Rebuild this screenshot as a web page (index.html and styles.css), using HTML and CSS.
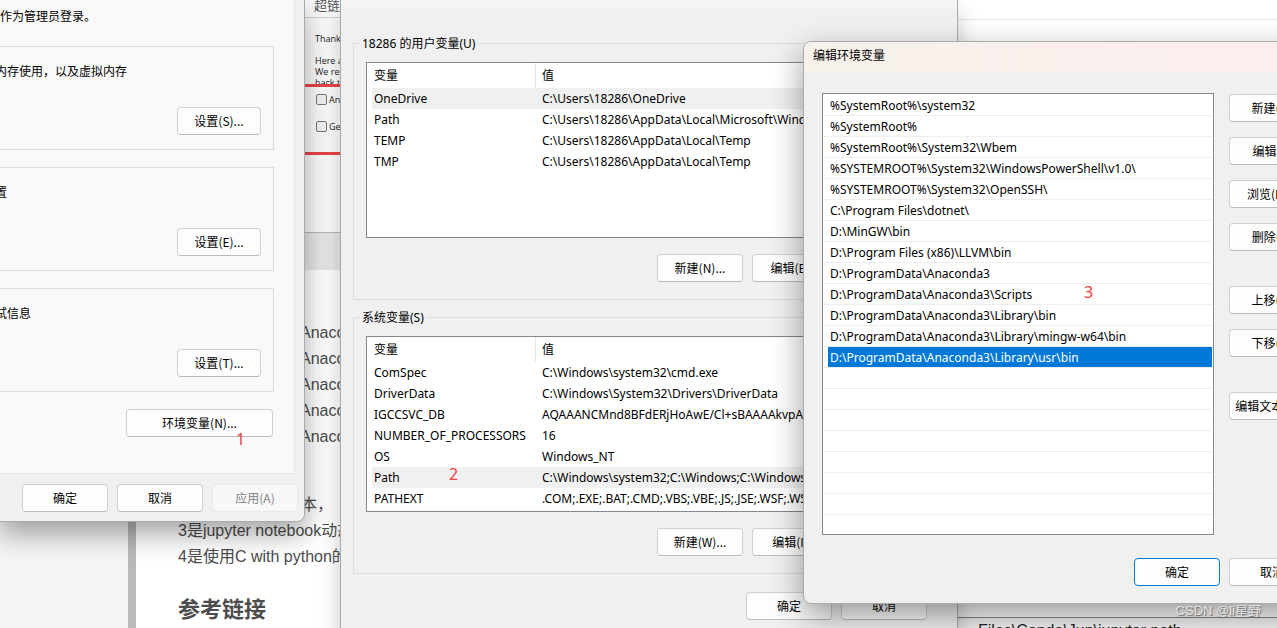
FILE: index.html
```html
<!DOCTYPE html>
<html lang="zh-CN">
<head>
<meta charset="utf-8">
<title>编辑环境变量</title>
<link rel="stylesheet" href="styles.css">
</head>
<body>
<main class="desktop">
  <div class="backdrop">
    <div class="side"></div>
    <article class="doc">
      <div class="shot">
        <div class="shot-bar">超链接</div>
        <div class="shot-text">
          <p>Thank you</p>
          <p class="para">Here are<br>We recommend<br>back to</p>
        </div>
        <div class="shot-options">
          <label><input type="checkbox">Anaconda</label>
          <label><input type="checkbox">Getting</label>
        </div>
        <div class="shot-foot"></div>
      </div>
      <div class="lines">
        <p>Anaconda</p><p>Anaconda</p><p>Anaconda</p><p>Anaconda</p><p>Anaconda</p>
      </div>
      <div class="notes">
        <p class="tail">本，</p>
        <p>3是jupyter notebook动态库</p>
        <p>4是使用C with python的时候</p>
      </div>
      <h2>参考链接</h2>
    </article>
    <aside class="pane">
      <div class="pane-top"></div>
      <p class="pane-text">Files\Conda\Jup\jupyter path</p>
    </aside>
  </div>

  <section class="window system">
    <div class="sheet">
      <p class="lead">作为管理员登录。</p>
      <div class="box"><p class="cut">内存使用，以及虚拟内存</p><button class="btn small">设置(S)...</button></div>
      <div class="box"><p class="cut">置</p><button class="btn small">设置(E)...</button></div>
      <div class="box"><p class="cut">试信息</p><button class="btn small">设置(T)...</button></div>
      <button class="btn env">环境变量(N)...</button>
    </div>
    <div class="actions">
      <button class="btn">确定</button>
      <button class="btn">取消</button>
      <button class="btn" disabled>应用(A)</button>
    </div>
  </section>

  <section class="window variables">
    <div class="strip"></div>
    <div class="groups">
      <fieldset>
        <legend>18286 的用户变量(U)</legend>
        <div class="listview">
          <table>
            <thead><tr><th class="name">变量</th><th>值</th></tr></thead>
            <tbody>
              <tr class="on"><td>OneDrive</td><td>C:\Users\18286\OneDrive</td></tr>
              <tr><td>Path</td><td>C:\Users\18286\AppData\Local\Microsoft\WindowsApps;</td></tr>
              <tr><td>TEMP</td><td>C:\Users\18286\AppData\Local\Temp</td></tr>
              <tr><td>TMP</td><td>C:\Users\18286\AppData\Local\Temp</td></tr>
            </tbody>
          </table>
        </div>
        <div class="row"><button class="btn">新建(N)...</button><button class="btn">编辑(E)...</button><button class="btn">删除(D)</button></div>
      </fieldset>
      <fieldset>
        <legend>系统变量(S)</legend>
        <div class="listview">
          <table>
            <thead><tr><th class="name">变量</th><th>值</th></tr></thead>
            <tbody>
              <tr><td>ComSpec</td><td>C:\Windows\system32\cmd.exe</td></tr>
              <tr><td>DriverData</td><td>C:\Windows\System32\Drivers\DriverData</td></tr>
              <tr><td>IGCCSVC_DB</td><td>AQAAANCMnd8BFdERjHoAwE/Cl+sBAAAAkvpAAAA</td></tr>
              <tr><td>NUMBER_OF_PROCESSORS</td><td>16</td></tr>
              <tr><td>OS</td><td>Windows_NT</td></tr>
              <tr class="on"><td>Path</td><td>C:\Windows\system32;C:\Windows;C:\Windows\System32</td></tr>
              <tr><td>PATHEXT</td><td>.COM;.EXE;.BAT;.CMD;.VBS;.VBE;.JS;.JSE;.WSF;.WSH;.MSC</td></tr>
            </tbody>
          </table>
        </div>
        <div class="row"><button class="btn">新建(W)...</button><button class="btn">编辑(I)...</button><button class="btn">删除(L)</button></div>
      </fieldset>
    </div>
    <div class="row bottom"><button class="btn">确定</button><button class="btn">取消</button></div>
  </section>

  <section class="window editor">
    <h1>编辑环境变量</h1>
    <div class="editor-body">
      <ul class="paths">
        <li>%SystemRoot%\system32</li>
        <li>%SystemRoot%</li>
        <li>%SystemRoot%\System32\Wbem</li>
        <li>%SYSTEMROOT%\System32\WindowsPowerShell\v1.0\</li>
        <li>%SYSTEMROOT%\System32\OpenSSH\</li>
        <li>C:\Program Files\dotnet\</li>
        <li>D:\MinGW\bin</li>
        <li>D:\Program Files (x86)\LLVM\bin</li>
        <li>D:\ProgramData\Anaconda3</li>
        <li>D:\ProgramData\Anaconda3\Scripts</li>
        <li>D:\ProgramData\Anaconda3\Library\bin</li>
        <li>D:\ProgramData\Anaconda3\Library\mingw-w64\bin</li>
        <li class="picked"><span>D:\ProgramData\Anaconda3\Library\usr\bin</span></li>
        <li></li><li></li><li></li><li></li><li></li><li></li><li></li><li></li>
      </ul>
      <div class="tools">
        <button class="btn">新建(N)</button>
        <button class="btn">编辑(E)</button>
        <button class="btn">浏览(B)...</button>
        <button class="btn">删除(D)</button>
        <button class="btn split">上移(U)</button>
        <button class="btn">下移(O)</button>
        <button class="btn split">编辑文本(T)...</button>
      </div>
    </div>
    <div class="row confirm"><button class="btn primary">确定</button><button class="btn">取消</button></div>
  </section>

  <span class="mark one">1</span>
  <span class="mark two">2</span>
  <span class="mark three">3</span>
  <span class="watermark">CSDN @li星野</span>
</main>
</body>
</html>
```

FILE: styles.css
```css
* { box-sizing: border-box; }
body, p, h1, h2, ul, fieldset { margin: 0; padding: 0; }
body {
  font: 12px/16px "Noto Sans", "Noto Sans CJK SC", sans-serif;
  color: #000;
}
.desktop {
  position: relative;
  height: 100vh;
  overflow: hidden;
  background: #fff;
}

/* Page behind the dialogs */
.backdrop { display: flex; height: 100%; }
.side {
  flex: none;
  width: 136px;
  background: #f5f5f5;
  border-right: 8px solid #bababa;
}
.doc {
  flex: none;
  width: 821px;
  padding-left: 42px;
  font: 16px/26px "Liberation Sans", "Noto Sans CJK SC", sans-serif;
  color: #4d4d4d;
}
.shot { background: #fcfcfc; font: 9px/11px "Open Sans", sans-serif; color: #222; }
.shot-bar {
  height: 18px;
  padding: 0 0 0 136px;
  border-bottom: 1px solid #d0d0d0;
  font: 13px/9px "Noto Sans CJK SC", sans-serif;
  color: #555;
}
.shot-text { height: 66px; padding: 15px 0 0 137px; overflow: hidden; }
.para { margin-top: 11px; }
.shot-options {
  display: flex;
  flex-direction: column;
  gap: 16px;
  height: 71px;
  padding: 7px 0 0 138px;
  border: solid #e84545;
  border-width: 3px 0;
}
.shot-options label { display: flex; align-items: center; gap: 2px; }
.shot-options input {
  appearance: none;
  width: 11px;
  height: 11px;
  margin: 0;
  border: 1px solid #777;
  border-radius: 2px;
  background: #f4f4f4;
}
.shot-foot { height: 115px; border-bottom: 37px solid #e8e8e8; box-shadow: inset 0 -1px #b8b8b8; }
.lines { padding: 50px 0 0 122px; }
.notes { padding-top: 42px; }
.tail { padding-left: 123px; }
.doc h2 { padding-top: 22px; font-size: 22px; line-height: 36px; }
.pane { flex: 1; display: flex; flex-direction: column; justify-content: space-between; }
.pane-top { height: 20px; border-bottom: 1px solid #e8e8e8; }
.pane-text {
  height: 11px;
  padding-left: 21px;
  border-top: 1px solid #888;
  background: #f4f4f4;
  font: 16px/26px "Liberation Sans", sans-serif;
  color: #222;
  white-space: nowrap;
}

/* Shared dialog parts */
.window {
  position: absolute;
  background: #f0f0f0;
  border: 1px solid #aaa;
  box-shadow: 0 12px 32px rgba(0, 0, 0, .4);
}
.btn {
  flex: none;
  width: 86px;
  height: 28px;
  padding: 0 0 1px;
  border: 1px solid #d0d0d0;
  border-bottom-color: #bababa;
  border-radius: 4px;
  background: #fdfdfd;
  font: 12px/16px "Noto Sans CJK SC", sans-serif;
  color: #000;
  white-space: nowrap;
}
.btn:disabled { color: #838383; background: #f8f8f8; border-color: #e8e8e8; }
.btn.primary { border-color: #0078d4; }
.row { display: flex; justify-content: flex-end; gap: 9px; }

/* System properties */
.system {
  left: -1px;
  top: -1px;
  width: 306px;
  border-radius: 0 0 8px 0;
  box-shadow: 0 12px 28px rgba(0, 0, 0, .36);
}
.sheet {
  display: flex;
  flex-direction: column;
  gap: 17px;
  width: 295px;
  padding: 9px 20px 36px 0;
  border: solid #e5e5e5;
  border-width: 0 1px 1px 0;
  background: #f9f9f9;
}
.lead { padding-bottom: 4px; }
.box {
  display: flex;
  flex-direction: column;
  justify-content: space-between;
  height: 104px;
  padding: 17px 12px 14px 0;
  border: 1px solid #dcdcdc;
  border-left: 0;
}
.box .cut { margin-left: -5px; }
.small { width: 84px; align-self: flex-end; }
.env { width: 147px; margin-right: 1px; align-self: flex-end; }
.actions { display: flex; gap: 9px; padding: 10px 0 9px 22px; }

/* Environment variables */
.variables {
  left: 340px;
  top: -1px;
  width: 618px;
  height: 660px;
  box-shadow: 0 12px 20px rgba(0, 0, 0, .22);
}
.strip { height: 9px; background: #f4f4f4; }
.groups { display: flex; flex-direction: column; gap: 9px; padding: 26px 12px 0; }
fieldset {
  min-width: 0;
  padding: 11px 11px 17px 12px;
  border: 1px solid #dcdcdc;
}
legend { margin-left: -6px; padding: 1px 2px 0; line-height: 15px; }
.listview {
  height: 176px;
  padding-left: 5px;
  border: 1px solid #828790;
  background: #fff;
  overflow: hidden;
}
table { width: 100%; table-layout: fixed; border-spacing: 0; }
th, td { height: 21px; padding: 0 0 0 2px; text-align: left; white-space: nowrap; }
th { height: 25px; font-weight: 400; }
.name { width: 164px; border-right: 1px solid #e5e5e5; }
th + th, td + td { padding-left: 6px; overflow: hidden; }
.on { background: #f0f0f0; }
fieldset .row { margin-top: 16px; }
.bottom { padding: 18px 30px 0 0; }

/* Edit environment variable */
.editor {
  left: 803px;
  top: 41px;
  width: 531px;
  border-radius: 8px;
  overflow: hidden;
}
.editor h1 {
  padding: 6px 9px 8px;
  background: linear-gradient(90deg, #f6f1ea, #faefed 70%);
  font-size: 12px;
  line-height: 16px;
  font-weight: 400;
}
.editor-body { display: flex; gap: 15px; padding: 21px 18px 0; }
.paths {
  flex: none;
  width: 392px;
  height: 442px;
  padding: 1px 1px 0;
  border: 1px solid #828790;
  background: #fff;
  list-style: none;
  overflow: hidden;
}
.paths li { height: 21px; padding-left: 6px; border-bottom: 1px solid #eee; line-height: 21px; }
.paths .picked { padding-left: 4px; }
.picked span { display: block; height: 20px; padding-left: 2px; background: #0078d7; color: #fff; }
.tools { display: flex; flex-direction: column; gap: 15px; padding-top: 1px; }
.tools .split { margin-top: 20px; }
.confirm { padding: 23px 18px 17px 0; }

.mark {
  position: absolute;
  font-size: 16px;
  line-height: 20px;
  color: #f04040;
}
.one { left: 236px; top: 429px; }
.two { left: 449px; top: 464px; }
.three { left: 1084px; top: 282px; }
.watermark {
  position: absolute;
  right: 16px;
  bottom: 8px;
  font: 13px/18px "Liberation Sans", "Noto Sans CJK SC", sans-serif;
  color: #e4e4e4;
  text-shadow: 1px 1px 1px #666;
}
```
